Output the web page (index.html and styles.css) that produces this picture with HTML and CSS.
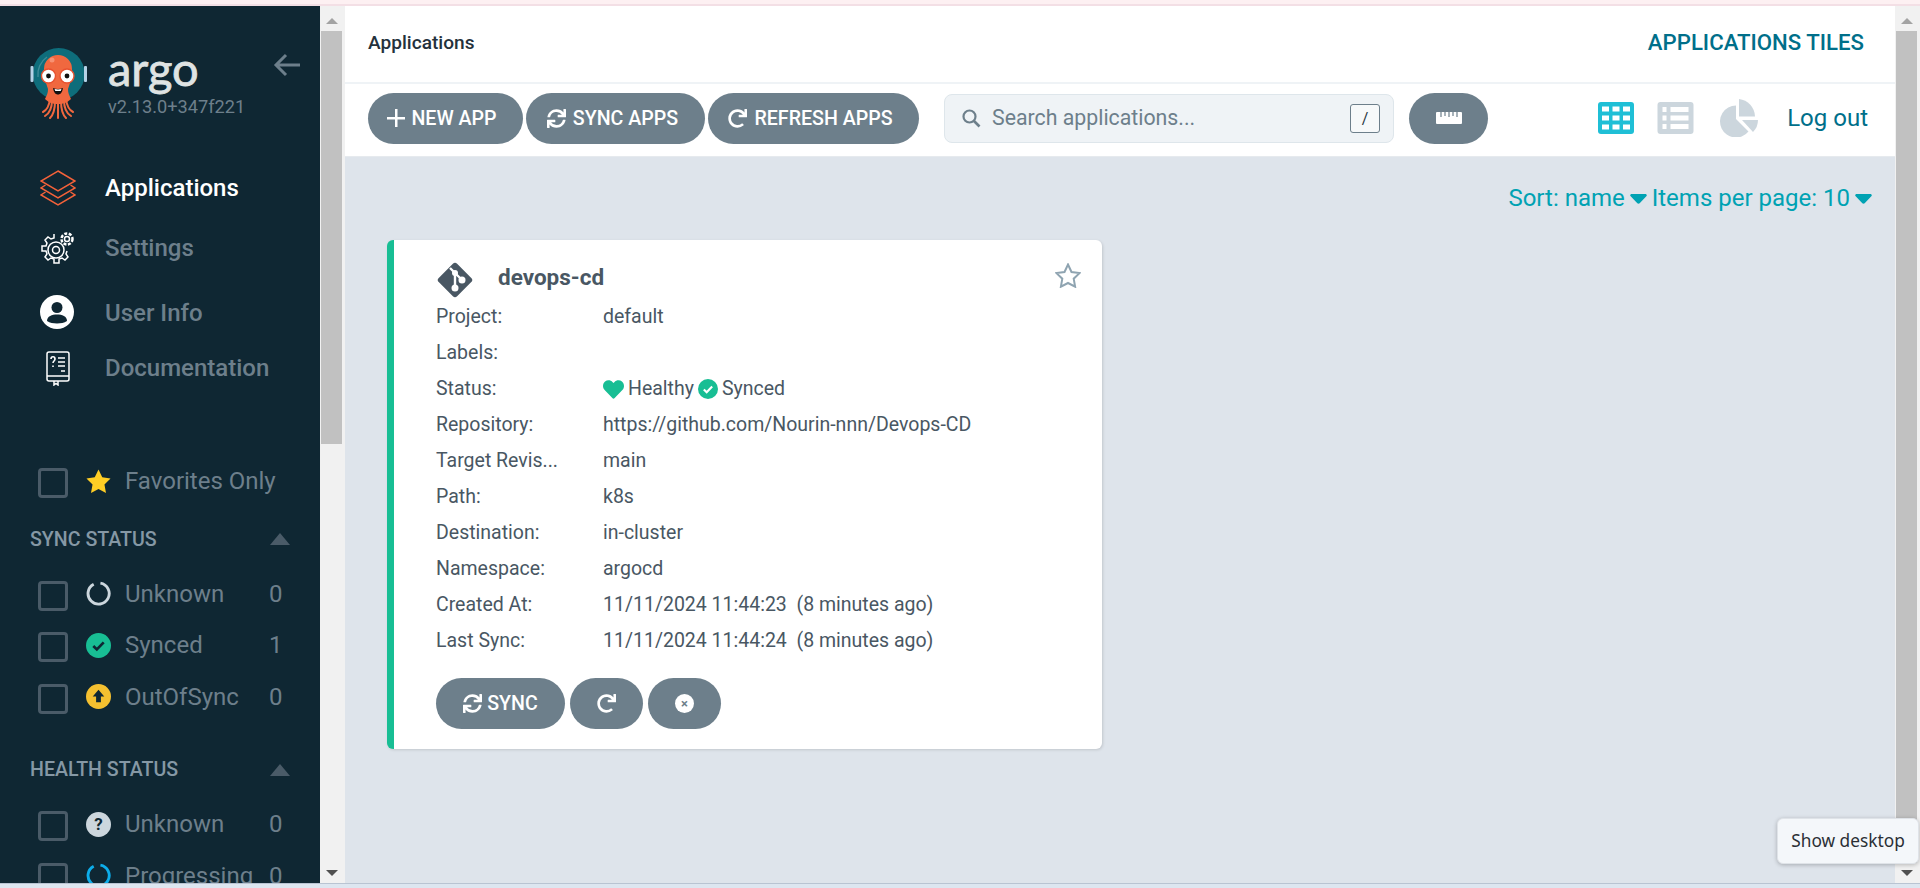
FILE: index.html
```html
<!DOCTYPE html>
<html lang="en">
<head>
<meta charset="utf-8">
<title>Argo CD - Applications</title>
<link rel="stylesheet" href="styles.css">
</head>
<body>
<svg class="sprite" aria-hidden="true">
  <defs>
    <symbol id="i-sync" viewBox="0 0 512 512"><path fill="currentColor" d="M440.65 12.57l4 82.77A247.16 247.16 0 0 0 255.83 8C134.73 8 33.91 94.92 12.29 209.82A12 12 0 0 0 24.09 224h49.05a12 12 0 0 0 11.67-9.26 175.91 175.91 0 0 1 317-56.94l-101.46-4.86a12 12 0 0 0-12.57 12v47.41a12 12 0 0 0 12 12H500a12 12 0 0 0 12-12V12a12 12 0 0 0-12-12h-47.37a12 12 0 0 0-11.98 12.57zM255.83 432a175.61 175.61 0 0 1-146-77.8l101.8 4.87a12 12 0 0 0 12.57-12v-47.4a12 12 0 0 0-12-12H12a12 12 0 0 0-12 12V500a12 12 0 0 0 12 12h47.35a12 12 0 0 0 12-12.6l-4.15-82.57A247.17 247.17 0 0 0 255.83 504c121.11 0 221.93-86.92 243.55-201.82a12 12 0 0 0-11.8-14.18h-49.05a12 12 0 0 0-11.67 9.26A175.86 175.86 0 0 1 255.83 432z"/></symbol>
    <symbol id="i-redo" viewBox="0 0 512 512"><path fill="currentColor" d="M500.33 0h-47.41a12 12 0 0 0-12 12.57l4 82.76A247.42 247.42 0 0 0 256 8C119.34 8 7.9 119.53 8 256.19 8.1 393.07 119.1 504 256 504a247.1 247.1 0 0 0 166.18-63.91 12 12 0 0 0 .48-17.43l-34-34a12 12 0 0 0-16.38-.55A176 176 0 1 1 402.1 157.8l-101.53-4.87a12 12 0 0 0-12.57 12v47.41a12 12 0 0 0 12 12h200.33a12 12 0 0 0 12-12V12a12 12 0 0 0-12-12z"/></symbol>
    <symbol id="i-heart" viewBox="0 0 512 512"><path fill="currentColor" d="M462.3 62.6C407.5 15.9 326 24.3 275.7 76.2L256 96.5l-19.7-20.3C186.1 24.3 104.5 15.9 49.7 62.6c-62.8 53.6-66.1 149.8-9.9 207.9l193.5 199.8c12.5 12.9 32.8 12.9 45.3 0l193.5-199.8c56.3-58.1 53-154.3-9.8-207.9z"/></symbol>
    <symbol id="i-check" viewBox="0 0 24 24"><circle cx="12" cy="12" r="12" fill="#18be94"/><path d="M7 12.5l3.4 3.3L17 9" fill="none" stroke="currentColor" stroke-width="2.6"/></symbol>
    <symbol id="i-caret" viewBox="0 0 20 12"><path fill="currentColor" d="M2 0h16c1.8 0 2.6 1.6 1.4 2.8l-8 8.3c-.8.8-2 .8-2.8 0l-8-8.3C-.6 1.6.2 0 2 0z"/></symbol>
  </defs>
</svg>

<div class="top-strip"></div>
<div class="app">
  <aside class="sidebar">
    <div class="brand">
      <svg class="brand-logo" viewBox="0 0 58 74" aria-hidden="true">
        <circle cx="28.700" cy="29" r="26" fill="#0e6d7b"/>
        <path d="M8 32a21 21 0 0 1 9-20" fill="none" stroke="#3d8b97" stroke-width="1.400"/>
        <rect x="0.500" y="21" width="3" height="16" rx="1" fill="#b5d2e6"/>
        <rect x="54" y="21" width="3" height="16" rx="1" fill="#b5d2e6"/>
        <g fill="none" stroke="#f0683f" stroke-width="2" stroke-linecap="round">
          <path d="M20 54c-1 8-3 11-7 13"/>
          <path d="M22 55c0 8-2 13-7 16"/>
          <path d="M25 56c0 8-1 13-5 17"/>
          <path d="M28 56v17"/>
          <path d="M31 56c0 8 1 13 5 17"/>
          <path d="M34 55c0 8 2 13 7 16"/>
          <path d="M36 54c1 8 3 11 7 13"/>
        </g>
        <path d="M15 54c2-4 3-6 3-10l-4-12V24a14 14 0 0 1 28 0v8l-4 12c0 4 1 6 3 10-3 3-7 5-13 5s-10-2-13-5z" fill="#f0683f"/>
        <circle cx="22" cy="15" r="2.500" fill="#f79172"/>
        <circle cx="18.500" cy="31" r="7" fill="#fff" stroke="#e8512f" stroke-width="1.400"/>
        <circle cx="37" cy="31" r="7" fill="#fff" stroke="#e8512f" stroke-width="1.400"/>
        <circle cx="18.500" cy="31" r="2.400" fill="#111"/>
        <circle cx="37" cy="31" r="2.400" fill="#111"/>
        <path d="M23 43c3.500 1.200 6.500 1.200 10 0-.8 4.500-2.500 6.500-5 6.500s-4.200-2-5-6.500z" fill="#111"/>
        <path d="M24.500 44c2.500.6 4.500.6 7 0l-.8 2h-5.400z" fill="#fff"/>
      </svg>
      <div class="brand-text">
        <div class="brand-name">argo</div>
        <div class="brand-version">v2.13.0+347f221</div>
      </div>
      <svg class="brand-back" viewBox="0 0 28 24" aria-hidden="true"><path d="M27 12H3M13 2L3 12l10 10" fill="none" stroke="currentColor" stroke-width="3"/></svg>
    </div>

    <nav class="nav">
      <div class="nav-item nav-active">
        <svg class="nav-icon" viewBox="0 0 36 36" aria-hidden="true"><g fill="none" stroke="#f4623a" stroke-width="1.500"><path d="M18 1l17 10-17 10L1 11z"/><path d="M5.500 15L1 18l17 10 17-10-4.500-3"/><path d="M5.500 22L1 25l17 10 17-10-4.500-3"/></g></svg>
        <span>Applications</span>
      </div>
      <div class="nav-item">
        <svg class="nav-icon" viewBox="0 0 36 36" aria-hidden="true"><g fill="none" stroke="#fff" stroke-width="1.500"><circle cx="16" cy="20" r="3.500"/><circle cx="16" cy="20" r="8"/><path d="M14 4v4l-3 1-3-2-3 3 2 3-1 3H2v5h4l1 3-2 3 3 3 3-2 3 1v4h5v-4l3-1 3 2 3-3-2-3 1-3"/><circle cx="27" cy="9" r="2.500"/><circle cx="27" cy="9" r="5.500" stroke-dasharray="3 1.500" stroke-width="2.500"/></g></svg>
        <span>Settings</span>
      </div>
      <div class="nav-item">
        <svg class="nav-icon" viewBox="0 0 36 36" aria-hidden="true"><circle cx="17" cy="17" r="17" fill="#fff"/><circle cx="17" cy="12.500" r="5.500" fill="#0f2733"/><path d="M7 26c0-5 5-6.500 10-6.500S27 21 27 26c-3 1.800-6 2.500-10 2.500S10 27.800 7 26z" fill="#0f2733"/></svg>
        <span>User Info</span>
      </div>
      <div class="nav-item">
        <svg class="nav-icon" viewBox="0 0 36 36" aria-hidden="true"><g fill="none" stroke="#fff" stroke-width="1.500"><rect x="7" y="2" width="22" height="29" rx="2"/><path d="M7 26h22M14 31v4l2-1.500 2 1.500v-4"/><path d="M18 8h7M18 12h7M18 16h7M21 21h4"/><path d="M11 9c0-3 4-3 4 0 0 2-2 2-2 4M13 15.500v1.500" stroke-width="1.600"/></g></svg>
        <span>Documentation</span>
      </div>
    </nav>

    <div class="filters">
      <div class="filter-row filter-fav">
        <span class="check"></span>
        <svg class="filter-icon" viewBox="0 0 26 25" aria-hidden="true"><path d="M13 0l3.900 8.200 8.600 1.200-6.300 6.100 1.600 9L13 20.200l-7.800 4.300 1.600-9L.5 9.400l8.600-1.200z" fill="#ffce25"/></svg>
        <span class="filter-label">Favorites Only</span>
      </div>

      <div class="filter-head"><span>SYNC STATUS</span><i class="up-caret"></i></div>
      <div class="filter-row">
        <span class="check"></span>
        <svg class="filter-icon" viewBox="0 0 26 26" aria-hidden="true"><path d="M15 2.200A11 11 0 1 1 8 3.300" fill="none" stroke="#ccd6dd" stroke-width="3"/></svg>
        <span class="filter-label">Unknown</span><span class="filter-count">0</span>
      </div>
      <div class="filter-row">
        <span class="check"></span>
        <svg class="filter-icon filter-check" aria-hidden="true"><use href="#i-check"/></svg>
        <span class="filter-label">Synced</span><span class="filter-count">1</span>
      </div>
      <div class="filter-row">
        <span class="check"></span>
        <svg class="filter-icon" viewBox="0 0 26 26" aria-hidden="true"><circle cx="13" cy="13" r="13" fill="#f4c030"/><path d="M13 6l6 7h-3.500v6h-5v-6H7z" fill="#0f2733"/></svg>
        <span class="filter-label">OutOfSync</span><span class="filter-count">0</span>
      </div>

      <div class="filter-head filter-head-health"><span>HEALTH STATUS</span><i class="up-caret"></i></div>
      <div class="filter-row">
        <span class="check"></span>
        <span class="filter-help">?</span>
        <span class="filter-label">Unknown</span><span class="filter-count">0</span>
      </div>
      <div class="filter-row">
        <span class="check"></span>
        <svg class="filter-icon" viewBox="0 0 26 26" aria-hidden="true"><path d="M15 2.200A11 11 0 1 1 8 3.300" fill="none" stroke="#0dadea" stroke-width="3"/></svg>
        <span class="filter-label">Progressing</span><span class="filter-count">0</span>
      </div>
    </div>
  </aside>

  <div class="rail">
    <i class="rail-up"></i>
    <div class="rail-track"><div class="rail-thumb rail-thumb-left"></div></div>
    <i class="rail-down"></i>
  </div>

  <main class="main">
    <header class="topbar">
      <div class="crumb">Applications</div>
      <div class="page-title">APPLICATIONS TILES</div>
    </header>
    <div class="toolbar">
      <button class="btn btn-new"><span class="plus"></span>NEW APP</button>
      <button class="btn btn-sync"><svg class="btn-icon" aria-hidden="true"><use href="#i-sync"/></svg>SYNC APPS</button>
      <button class="btn btn-refresh"><svg class="btn-icon" aria-hidden="true"><use href="#i-redo"/></svg>REFRESH APPS</button>
      <div class="search">
        <svg class="search-icon" viewBox="0 0 20 20" aria-hidden="true"><circle cx="8.500" cy="8.500" r="6" fill="none" stroke="currentColor" stroke-width="2.200"/><path d="M13 13l5.500 5.500" stroke="currentColor" stroke-width="2.600"/></svg>
        <span class="search-text">Search applications...</span>
        <span class="kbd">/</span>
      </div>
      <button class="btn btn-ruler">
        <svg class="ruler" viewBox="0 0 26 12" aria-hidden="true"><rect width="26" height="12" rx="1" fill="#fff"/><path d="M5 0v5M9 0v4M13 0v5M17 0v4M21 0v5" stroke="#6d7f8b" stroke-width="1.200"/></svg>
      </button>
      <div class="views">
        <svg class="view-icon view-on" viewBox="0 0 36 32" aria-hidden="true"><rect width="36" height="32" rx="3" fill="currentColor"/><g fill="#fff"><rect x="4" y="4.500" width="7" height="5"/><rect x="14.500" y="4.500" width="7" height="5"/><rect x="25" y="4.500" width="7" height="5"/><rect x="4" y="13.500" width="7" height="5"/><rect x="14.500" y="13.500" width="7" height="5"/><rect x="25" y="13.500" width="7" height="5"/><rect x="4" y="22.500" width="7" height="5"/><rect x="14.500" y="22.500" width="7" height="5"/><rect x="25" y="22.500" width="7" height="5"/></g></svg>
        <svg class="view-icon view-list" viewBox="0 0 36 32" aria-hidden="true"><rect width="36" height="32" rx="3" fill="currentColor"/><g fill="#fff"><rect x="5" y="5" width="4" height="5"/><rect x="13" y="5" width="18" height="5"/><rect x="5" y="13.500" width="4" height="5"/><rect x="13" y="13.500" width="18" height="5"/><rect x="5" y="22" width="4" height="5"/><rect x="13" y="22" width="18" height="5"/></g></svg>
        <svg class="view-icon view-pie" viewBox="0 0 40 38" aria-hidden="true"><g fill="currentColor"><path d="M17 6.500a16 16 0 1 0 12.500 26L17 20z"/><path d="M20 0a18 18 0 0 1 16 17.500H20z"/><path d="M23 21h16a17 17 0 0 1-5 12z"/></g></svg>
      </div>
      <div class="logout">Log out</div>
    </div>

    <section class="content">
      <div class="sort-bar">
        <span>Sort: name</span><svg class="sort-caret" aria-hidden="true"><use href="#i-caret"/></svg>
        <span class="sort-items">Items per page: 10</span><svg class="sort-caret" aria-hidden="true"><use href="#i-caret"/></svg>
      </div>
      <article class="card">
        <div class="card-head">
          <svg class="git-icon" viewBox="0 0 38 38" aria-hidden="true">
            <rect x="6" y="6" width="26" height="26" rx="3" transform="rotate(45 19 19)" fill="#495763"/>
            <path d="M14 7l5 5v14M19 12l7 7" fill="none" stroke="#fff" stroke-width="2.400"/>
            <circle cx="19" cy="12" r="3" fill="#fff"/><circle cx="19" cy="27" r="3.500" fill="#fff"/><circle cx="26" cy="19" r="3.500" fill="#fff"/>
          </svg>
          <h2 class="card-title">devops-cd</h2>
          <svg class="card-star" viewBox="0 0 26 25" aria-hidden="true"><path d="M13 1.500l3.500 7.500 8 1.100-5.800 5.600 1.400 8L13 20l-7.100 3.700 1.400-8L1.500 10.100l8-1.100z" fill="none" stroke="currentColor" stroke-width="2"/></svg>
        </div>
        <dl class="fields">
          <dt>Project:</dt><dd>default</dd>
          <dt>Labels:</dt><dd></dd>
          <dt>Status:</dt>
          <dd class="status">
            <svg class="st-heart" aria-hidden="true"><use href="#i-heart"/></svg><span>Healthy</span>
            <svg class="st-check" aria-hidden="true"><use href="#i-check"/></svg><span>Synced</span>
          </dd>
          <dt>Repository:</dt><dd>https://github.com/Nourin-nnn/Devops-CD</dd>
          <dt>Target Revis...</dt><dd>main</dd>
          <dt>Path:</dt><dd>k8s</dd>
          <dt>Destination:</dt><dd>in-cluster</dd>
          <dt>Namespace:</dt><dd>argocd</dd>
          <dt>Created At:</dt><dd>11/11/2024 11:44:23 &nbsp;(8 minutes ago)</dd>
          <dt>Last Sync:</dt><dd>11/11/2024 11:44:24 &nbsp;(8 minutes ago)</dd>
        </dl>
        <div class="card-actions">
          <button class="btn btn-card-sync"><svg class="btn-icon" aria-hidden="true"><use href="#i-sync"/></svg>SYNC</button>
          <button class="btn btn-round"><svg class="btn-icon" aria-hidden="true"><use href="#i-redo"/></svg></button>
          <button class="btn btn-round"><span class="x-dot">×</span></button>
        </div>
      </article>
    </section>
  </main>

  <div class="rail">
    <i class="rail-up"></i>
    <div class="rail-track"><div class="rail-thumb rail-thumb-right"></div></div>
    <i class="rail-down"></i>
  </div>
</div>
<div class="bottom-strip"></div>
<div class="tooltip">Show desktop</div>
</body>
</html>
```

FILE: styles.css
```css
* { box-sizing: border-box; }
html, body { margin: 0; height: 100%; overflow: hidden; }
body {
  font-family: Roboto, "Liberation Sans", sans-serif;
  display: flex;
  flex-direction: column;
  height: 888px;
  background: #fff;
  color: #495763;
}
.sprite { position: absolute; width: 0; height: 0; }

.top-strip { height: 6px; flex: none; background: #fdf0f2; border-bottom: 2px solid #f3dfe5; }
.bottom-strip { height: 5px; flex: none; background: #dde6f0; border-top: 1px solid #b9c4d2; }
.app { flex: 1; min-height: 0; display: flex; }

/* Sidebar */
.sidebar { width: 320px; flex: none; background: #0f2733; overflow: hidden; color: #6d7f8b; }
.brand { height: 152px; display: flex; padding: 39px 0 0 30px; position: relative; }
.brand-logo { width: 58px; height: 74px; flex: none; }
.brand-text { margin-left: 20px; }
.brand-name { font-family: Lato, "Noto Sans", sans-serif; font-size: 47px; line-height: 47px; font-weight: 400; color: #dfe3e3; height: 48px; margin-top: 0; -webkit-text-stroke: .8px #dfe3e3; }
.brand-version { font-size: 18.200px; line-height: 20px; color: #6d7f8b; margin-top: 4px; }
.brand-back { position: absolute; left: 273px; top: 47px; width: 28px; height: 24px; color: #6d7f8b; }

.nav { display: grid; grid-template-rows: 60px 60px 69px 42px; }
.nav-item { display: flex; align-items: center; padding-left: 40px; font-size: 24px; font-weight: 500; }
.nav-icon { width: 36px; height: 36px; margin-right: 29px; flex: none; }
.nav-active { color: #fff; }

.filters { padding-top: 79px; }
.filter-row { height: 51.500px; display: flex; align-items: center; padding-left: 38px; font-size: 24px; }
.filter-fav { height: 30px; margin-bottom: 0; }
.check { width: 30px; height: 30px; border: 3px solid #4a5b68; border-radius: 4px; flex: none; margin-right: 18px; }
.filter-icon { width: 25px; height: 25px; flex: none; margin-right: 14px; color: #0f2733; margin-top: -4px; }
.filter-check { color: #0f2733; }
.filter-help { width: 25px; height: 25px; border-radius: 50%; background: #ccd6dd; color: #0f2733; font-size: 17px; font-weight: 700; text-align: center; line-height: 25px; flex: none; margin-right: 14px; margin-top: -4px; }
.filter-label { width: 144px; margin-top: -4px; white-space: nowrap; }
.filter-count { margin-top: -4px; }
.filter-head { height: 44px; margin-top: 19px; padding: 0 30px; display: flex; justify-content: space-between; align-items: center; font-size: 19.600px; font-weight: 500; color: #8598a5; }
.filter-head-health { margin-top: 23px; margin-bottom: 9px; }
.filter-head + .filter-row { margin-top: 9px; }
.filter-head-health + .filter-row { margin-top: 0; }
.up-caret { width: 0; height: 0; border: 10px solid transparent; border-top: 0; border-bottom: 12px solid #4a5b68; }

/* Fake scrollbars */
.rail { width: 25px; flex: none; background: #f1f1f1; display: flex; flex-direction: column; align-items: center; padding: 0 2px 0 0; }
.rail-up, .rail-down { width: 0; height: 0; border: 6px solid transparent; flex: none; margin: 6px 0 6px 0; }
.rail-up { border-top: 0; border-bottom: 6px solid #a3a3a3; margin: 12px 0 7px; }
.rail-down { border-bottom: 0; border-top: 6px solid #505050; margin: 7px 0 7px; }
.rail-track { flex: 1; width: 21px; min-height: 0; }
.rail-thumb { width: 21px; background: #c1c1c1; }
.rail-thumb-left { height: 413px; }
.rail-thumb-right { height: 100%; }

/* Main */
.main { flex: 1; min-width: 0; display: flex; flex-direction: column; background: #dee4eb; }
.topbar { height: 76px; flex: none; background: #fff; display: flex; justify-content: space-between; align-items: center; padding: 0 31px 4px 23px; }
.crumb { font-size: 19.100px; font-weight: 500; color: #24313c; }
.page-title { font-size: 22.200px; font-weight: 500; color: #006f8a; }
.toolbar { height: 75px; flex: none; background: #fff; border-top: 2px solid #eff3f6; border-bottom: 1px solid #e6eaee; display: flex; align-items: center; padding: 0 27px 4px 23px; }

.btn { border: 0; background: #6d7f8b; color: #fff; height: 51px; border-radius: 26px; font-family: inherit; font-size: 19.600px; font-weight: 500; display: inline-flex; align-items: center; justify-content: center; padding: 0; white-space: nowrap; flex: none; }
.btn-icon { width: 19px; height: 19px; margin-right: 7px; flex: none; }
.btn-new { width: 155px; padding-right: 7px; }
.btn-sync { width: 179px; margin-left: 3px; padding-right: 6px; }
.btn-refresh { width: 211px; margin-left: 3px; padding-right: 6px; }
.plus { width: 18px; height: 18px; margin-right: 6px; position: relative; background: linear-gradient(#fff,#fff) center/100% 2.500px no-repeat, linear-gradient(#fff,#fff) center/2.500px 100% no-repeat; }

.search { width: 450px; height: 49px; margin-left: 25px; background: #eff3f6; border: 1px solid #dee6eb; border-radius: 8px; display: flex; align-items: center; padding: 0 13px 0 16px; flex: none; color: #6d7f8b; }
.search-icon { width: 20px; height: 20px; flex: none; color: #6d7f8b; }
.search-text { flex: 1; margin: -2px 0 0 11px; font-size: 21.300px; color: #6d7f8b; }
.kbd { width: 30px; height: 29px; border: 1px solid #6d7f8b; background: #f7f9fa; border-radius: 3px; text-align: center; font-size: 16px; line-height: 27px; color: #2c3a45; }
.btn-ruler { width: 79px; margin-left: 15px; }
.ruler { width: 26px; height: 12px; }

.views { margin-left: auto; display: flex; align-items: center; gap: 23px; }
.view-icon { display: block; flex: none; }
.view-on { width: 36px; height: 32px; color: #1fbfd6; }
.view-list { width: 37px; height: 32px; color: #ccd6dd; }
.view-pie { width: 40px; height: 38px; color: #ccd6dd; margin-left: 2px; }
.logout { margin-left: 28px; font-size: 24px; color: #006f8a; }

.content { flex: 1; min-height: 0; padding: 0 0 0 42px; overflow: hidden; }
.sort-bar { height: 83px; margin-right: 23px; display: flex; align-items: center; justify-content: flex-end; font-size: 24px; color: #00a2b3; padding-bottom: 2px; }
.sort-caret { width: 17px; height: 10px; margin-left: 5px; margin-top: 2px; flex: none; }
.sort-items { margin-left: 5px; }

.card { width: 715px; height: 509px; background: #fff; border-left: 7px solid #18be94; border-radius: 6px; box-shadow: 1px 1px 3px rgba(0,0,0,.13); padding: 21px 0 0 42px; }
.card-head { height: 38px; display: flex; align-items: center; position: relative; }
.git-icon { width: 38px; height: 38px; flex: none; }
.card-title { margin: -7px 0 0 24px; font-size: 22.500px; font-weight: 700; color: #495763; }
.card-star { width: 26px; height: 25px; position: absolute; left: 619px; top: 2px; color: #8fa4b1; }

.fields { margin: 0; display: grid; grid-template-columns: 125px 1fr; column-gap: 42px; grid-auto-rows: 36px; font-size: 19.500px; padding-top: 0; }
.fields dt, .fields dd { margin: 0; line-height: 36px; white-space: nowrap; height: 36px; }
.status { display: flex; align-items: center; }
.st-heart { width: 21px; height: 21px; color: #18be94; margin-right: 4px; }
.st-check { width: 20px; height: 20px; color: #fff; margin: 0 4px; }

.card-actions { display: flex; gap: 5px; margin-top: 19px; }
.btn-card-sync { width: 129px; }
.btn-card-sync .btn-icon { margin-right: 5px; }
.btn-round { width: 73px; }
.btn-round .btn-icon { margin-right: 0; }
.x-dot { width: 19px; height: 19px; border-radius: 50%; background: #fff; color: #6d7f8b; font-size: 13px; font-weight: 700; line-height: 19px; text-align: center; }

.tooltip { position: absolute; left: 1777px; top: 818px; width: 142px; height: 46px; background: #f4f7fa; border: 1px solid #dfe3e8; border-radius: 6px; box-shadow: 0 1px 4px rgba(0,0,0,.25); font-family: "Noto Sans", "Open Sans", sans-serif; font-size: 17.300px; line-height: 44px; text-align: center; color: #2a2f35; }
```
